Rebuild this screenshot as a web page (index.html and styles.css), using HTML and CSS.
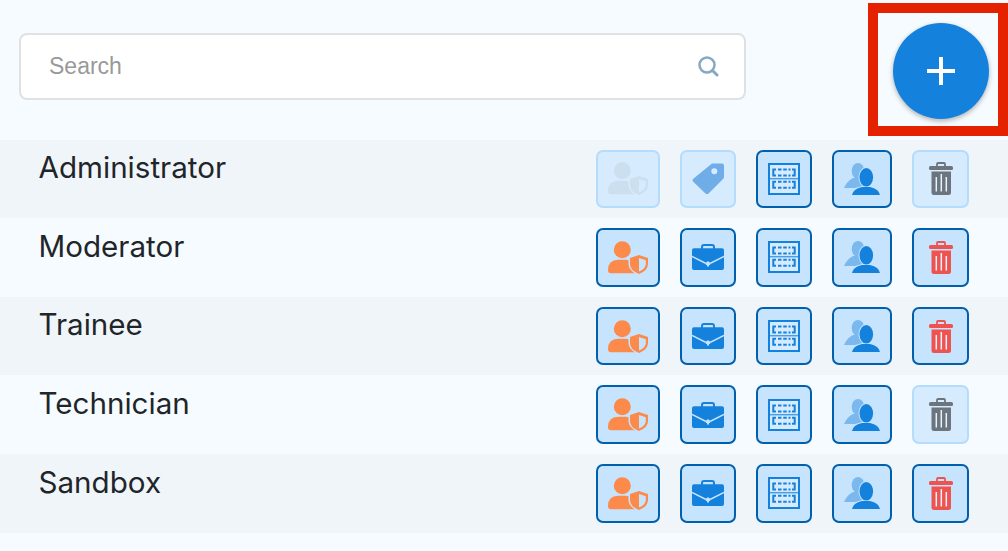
FILE: index.html
```html
<!DOCTYPE html>
<html lang="en">
<head>
    <meta charset="UTF-8">
    <meta name="viewport" content="width=device-width, initial-scale=1.0">
    <title>Roles</title>
    <link rel="stylesheet" href="styles.css">
</head>
<body>
    <!-- Shared icons -->
    <svg class="sprite" aria-hidden="true">
        <symbol id="i-role" viewBox="0 0 40 33">
            <circle cx="14.300" cy="8.700" r="8.500" fill="currentColor"/>
            <path d="M0 29Q0 19 10 18.700H18Q26 19 27 29V32.300H3Q0 32.300 0 29Z" fill="currentColor"/>
            <path d="M31 12.500L41 16V23Q41 30 31 34.500Q20.500 30 20.500 23V16Z" fill="var(--btn-bg)"/>
            <path d="M31 14L40 17V23Q40 29.500 31 33Q22 29.500 22 23V17Z" fill="currentColor"/>
            <path d="M31 17L37.800 19.200V23Q37.800 27.500 31 30.500Z" fill="var(--btn-bg)"/>
        </symbol>
        <symbol id="i-case" viewBox="0 0 32 26">
            <path d="M10 5V3Q10 1 12 1H20Q22 1 22 3V5" fill="none" stroke="#1482dc" stroke-width="2"/>
            <path d="M2 4.300H30Q32 4.300 32 6.300V24Q32 26 30 26H2Q0 26 0 24V6.300Q0 4.300 2 4.300Z" fill="#1482dc"/>
            <path d="M0 12.500L13 19H19L32 12.500" fill="none" stroke="#c7e4fe" stroke-width="1.500"/>
            <path d="M16 17.500V22.500M13.800 20H18.200" stroke="#c7e4fe" stroke-width="2"/>
        </symbol>
        <symbol id="i-grid" viewBox="0 0 32 32">
            <rect x="1" y="1" width="30" height="30" fill="#d6ebff" stroke="#1482dc" stroke-width="2"/>
            <path d="M2 15.700H30" stroke="#4a9fe4" stroke-width="1.500"/>
            <path d="M8 6.500H5.300V12.500H8M24 6.500H26.700V12.500H24M8 18.700H5.300V24.700H8M24 18.700H26.700V24.700H24" fill="none" stroke="#1482dc" stroke-width="2"/>
            <path d="M10 6.500H22.500M10 12.500H22.500M10 18.700H22.500M10 24.700H22.500" stroke="#1482dc" stroke-width="2" stroke-dasharray="3.500 1.750"/>
        </symbol>
        <symbol id="i-users" viewBox="0 0 36 32">
            <ellipse cx="14" cy="8" rx="6.300" ry="8" fill="#7ab8ee"/>
            <path d="M0 25Q3 18 9 15H20V25Z" fill="#7ab8ee"/>
            <ellipse cx="22.300" cy="14.300" rx="7.800" ry="10.300" fill="#c7e4fe"/>
            <path d="M6.500 33Q8 25 18 23H26Q35 25 37 33Z" fill="#c7e4fe"/>
            <ellipse cx="22.300" cy="14.300" rx="6.800" ry="9.300" fill="#1482dc"/>
            <path d="M8 32Q9 26 18 24H26Q35 26 36 32Z" fill="#1482dc"/>
        </symbol>
        <symbol id="i-trash" viewBox="0 0 24 33">
            <path d="M8 4.500V2Q8 1 9 1H15Q16 1 16 2V4.500" fill="none" stroke="currentColor" stroke-width="1.800"/>
            <rect x="0" y="4" width="24" height="4" rx="1.500" fill="currentColor"/>
            <path d="M2.500 9.500H22V30.500Q22 33 19.500 33H5Q2.500 33 2.500 30.500Z" fill="currentColor"/>
            <path d="M7.300 15V29.500M12.300 12V29.500M17.300 15V29.500" stroke="#e6f2fd" stroke-width="1.500"/>
        </symbol>
        <symbol id="i-tag" viewBox="0 0 32 32">
            <path d="M20 0.500H30Q32 0.500 32 2.500V13.500Q32 15 31 16L16.500 30.500Q15 31.500 13.500 30.500L1 18.500Q0 17 1 16ZM22.300 5.300A3 3 0 1 0 22.300 11.300A3 3 0 1 0 22.300 5.300Z" fill="#6fade8" fill-rule="evenodd"/>
        </symbol>
    </svg>

    <header class="top-bar">
        <div class="search">
            <input class="search-input" type="text" placeholder="Search">
            <svg class="search-icon" viewBox="0 0 21 21">
                <circle cx="9" cy="9" r="7.500" fill="none" stroke="#86a9c2" stroke-width="2.500"/>
                <path d="M14.500 14.500L19 19" stroke="#86a9c2" stroke-width="3" stroke-linecap="round"/>
            </svg>
        </div>
        <div class="highlight">
            <button class="add-btn" type="button" aria-label="Add"><span class="plus"></span></button>
        </div>
    </header>

    <main class="role-list">
        <div class="role-row">
            <div class="role-name">Administrator</div>
            <div class="actions">
                <button class="btn w-role off" type="button"><svg class="ico-role faded"><use href="#i-role"/></svg></button>
                <button class="btn w-case off" type="button"><svg class="ico-tag"><use href="#i-tag"/></svg></button>
                <button class="btn w-grid" type="button"><svg class="ico-grid"><use href="#i-grid"/></svg></button>
                <button class="btn w-users" type="button"><svg class="ico-users"><use href="#i-users"/></svg></button>
                <button class="btn w-trash off" type="button"><svg class="ico-trash grey"><use href="#i-trash"/></svg></button>
            </div>
        </div>
        <div class="role-row">
            <div class="role-name">Moderator</div>
            <div class="actions">
                <button class="btn w-role" type="button"><svg class="ico-role orange"><use href="#i-role"/></svg></button>
                <button class="btn w-case" type="button"><svg class="ico-case"><use href="#i-case"/></svg></button>
                <button class="btn w-grid" type="button"><svg class="ico-grid"><use href="#i-grid"/></svg></button>
                <button class="btn w-users" type="button"><svg class="ico-users"><use href="#i-users"/></svg></button>
                <button class="btn w-trash" type="button"><svg class="ico-trash red"><use href="#i-trash"/></svg></button>
            </div>
        </div>
        <div class="role-row">
            <div class="role-name">Trainee</div>
            <div class="actions">
                <button class="btn w-role" type="button"><svg class="ico-role orange"><use href="#i-role"/></svg></button>
                <button class="btn w-case" type="button"><svg class="ico-case"><use href="#i-case"/></svg></button>
                <button class="btn w-grid" type="button"><svg class="ico-grid"><use href="#i-grid"/></svg></button>
                <button class="btn w-users" type="button"><svg class="ico-users"><use href="#i-users"/></svg></button>
                <button class="btn w-trash" type="button"><svg class="ico-trash red"><use href="#i-trash"/></svg></button>
            </div>
        </div>
        <div class="role-row">
            <div class="role-name">Technician</div>
            <div class="actions">
                <button class="btn w-role" type="button"><svg class="ico-role orange"><use href="#i-role"/></svg></button>
                <button class="btn w-case" type="button"><svg class="ico-case"><use href="#i-case"/></svg></button>
                <button class="btn w-grid" type="button"><svg class="ico-grid"><use href="#i-grid"/></svg></button>
                <button class="btn w-users" type="button"><svg class="ico-users"><use href="#i-users"/></svg></button>
                <button class="btn w-trash off" type="button"><svg class="ico-trash grey"><use href="#i-trash"/></svg></button>
            </div>
        </div>
        <div class="role-row">
            <div class="role-name">Sandbox</div>
            <div class="actions">
                <button class="btn w-role" type="button"><svg class="ico-role orange"><use href="#i-role"/></svg></button>
                <button class="btn w-case" type="button"><svg class="ico-case"><use href="#i-case"/></svg></button>
                <button class="btn w-grid" type="button"><svg class="ico-grid"><use href="#i-grid"/></svg></button>
                <button class="btn w-users" type="button"><svg class="ico-users"><use href="#i-users"/></svg></button>
                <button class="btn w-trash" type="button"><svg class="ico-trash red"><use href="#i-trash"/></svg></button>
            </div>
        </div>
    </main>
</body>
</html>
```

FILE: styles.css
```css
* {
    margin: 0;
    padding: 0;
    box-sizing: border-box;
}

html, body {
    height: 100%;
    overflow: hidden;
}

body {
    font-family: Inter, "Liberation Sans", sans-serif;
    background: #f6fbff;
    color: #212529;
}

.sprite {
    display: none;
}

.top-bar {
    height: 139.6px;
    display: flex;
    align-items: flex-start;
    justify-content: space-between;
    padding: 3px 0 0 19px;
}

.search {
    width: 727px;
    height: 67px;
    margin-top: 30px;
    display: flex;
    align-items: center;
    padding: 0 25px 0 28px;
    background: #fff;
    border: 2px solid #dfe1e3;
    border-radius: 8px;
}

.search-input {
    flex: 1;
    border: 0;
    outline: 0;
    background: transparent;
    font-family: "Liberation Sans", sans-serif;
    font-size: 23px;
    color: #212529;
}

.search-input::placeholder {
    color: #999;
    opacity: 1;
}

.search-icon {
    width: 21px;
    height: 21px;
    flex: none;
    margin-top: -1px;
}

.highlight {
    width: 140px;
    height: 133px;
    border: 10px solid #e52200;
    padding: 10px 0 0 15px;
    flex: none;
}

.add-btn {
    width: 96px;
    height: 96px;
    border: 0;
    border-radius: 50%;
    background: #1482dc;
    box-shadow: 0 2px 5px rgba(0, 0, 0, 0.3);
    display: flex;
    align-items: center;
    justify-content: center;
}

.plus {
    width: 28px;
    height: 28px;
    background:
        linear-gradient(#fff, #fff) center / 4px 28px no-repeat,
        linear-gradient(#fff, #fff) center / 28px 4px no-repeat;
}

.role-row {
    height: 78.6px;
    display: flex;
    justify-content: space-between;
    padding: 10px 39px 0 38.5px;
}

.role-row:nth-child(odd) {
    background: #f0f5fa;
}

.role-name {
    font-size: 29.6px;
    line-height: 35px;
    margin-top: 0.7px;
}

.actions {
    display: flex;
    gap: 20px;
}

.btn {
    --btn-bg: #c7e4fe;
    height: 58.6px;
    display: flex;
    align-items: center;
    justify-content: center;
    background: var(--btn-bg);
    border: 2px solid #0060ad;
    border-radius: 7px;
}

.btn.off {
    --btn-bg: #d6ebfe;
    border-color: #b3dcfd;
}

.w-role { width: 64px; }
.w-case { width: 56px; }
.w-grid { width: 56px; }
.w-users { width: 60px; }
.w-trash { width: 57px; }

.ico-role { width: 40px; height: 33px; }
.ico-case { width: 32px; height: 26px; }
.ico-tag { width: 32px; height: 32px; }
.ico-grid { width: 32px; height: 32px; }
.ico-users { width: 36px; height: 32px; }
.ico-trash { width: 24px; height: 33px; }

.orange { color: #fb8a4b; }
.faded { color: #cbdfee; }
.red { color: #ef5350; }
.grey { color: #6c757d; }
```
